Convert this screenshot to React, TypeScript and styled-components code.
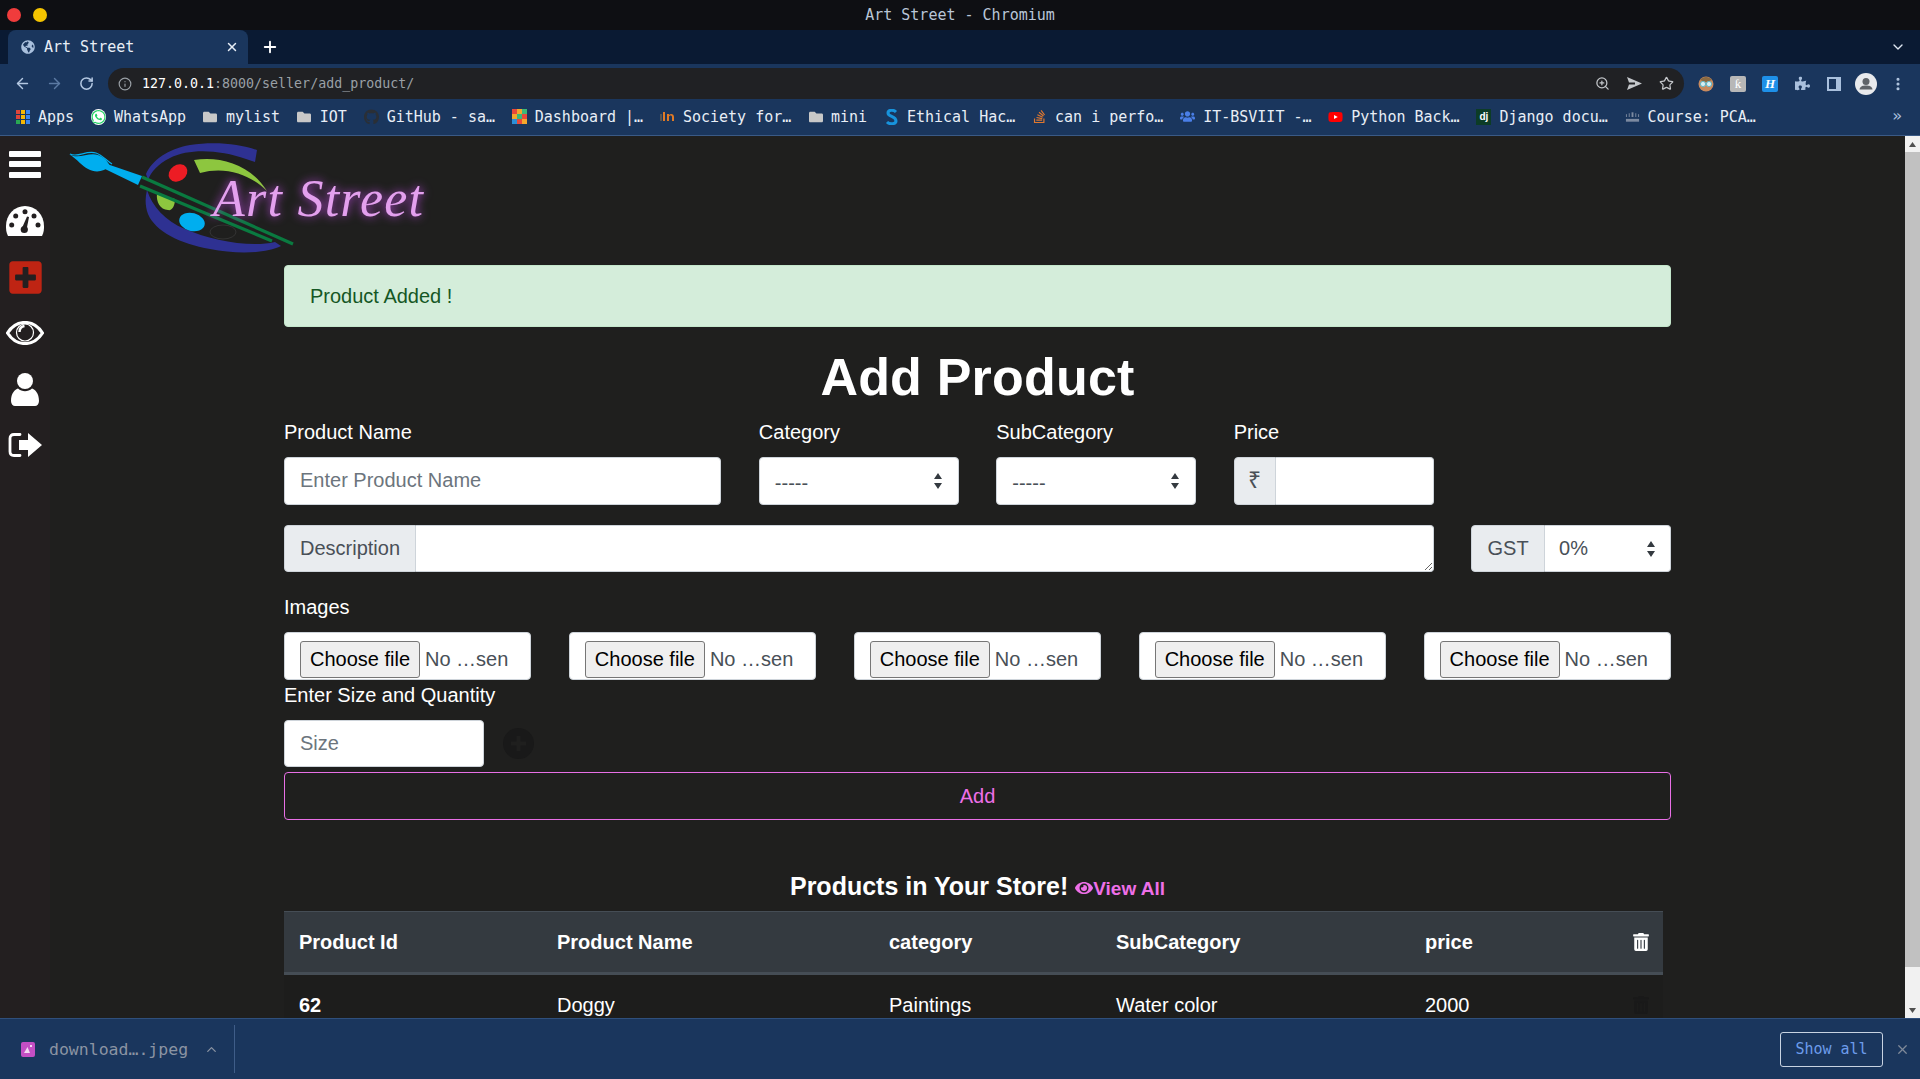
import React from "react";
import styled, { createGlobalStyle } from "styled-components";
import {
  FaEye,
  FaFolder,
  FaGithub,
  FaGlobeAmericas,
  FaPlusSquare,
  FaPuzzlePiece,
  FaStackOverflow,
  FaTrashAlt,
  FaUsers,
  FaWhatsapp,
  FaYoutube,
} from "react-icons/fa";
import { ArrowLeft, ArrowRight, ChevronDown, ChevronUp, Info, MoreVertical, Plus, RotateCw, Star, X, ZoomIn } from "lucide-react";

const GlobalStyle = createGlobalStyle`
  html, body {
    margin: 0;
    padding: 0;
    height: 100%;
    overflow: hidden;
    background: #1f1f1e;
  }
  * {
    box-sizing: border-box;
  }
`;

const mono = `"DejaVu Sans Mono", "Liberation Mono", monospace`;
const sans = `"Liberation Sans", Arial, sans-serif`;

const selectArrow =
  "data:image/svg+xml,%3csvg xmlns='http://www.w3.org/2000/svg' width='10' height='20' viewBox='0 0 10 20'%3e%3cpath fill='%23343a40' d='M5 2l4 6H1zM5 18l-4-6h8z'/%3e%3c/svg%3e";

const Page = styled.div`
  height: 100vh;
  display: flex;
  flex-direction: column;
  overflow: hidden;
`;

const TitleBar = styled.div`
  flex: 0 0 30px;
  background: #0e0f13;
  display: flex;
  align-items: center;
  padding-left: 7px;
  gap: 12px;
  position: relative;
`;

const WindowDot = styled.span<{ $color: string }>`
  width: 14px;
  height: 14px;
  border-radius: 50%;
  background: ${(p) => p.$color};
`;

const WindowTitle = styled.div`
  position: absolute;
  left: 0;
  right: 0;
  text-align: center;
  font: 15px ${mono};
  color: #b9c6d8;
`;

const TabStrip = styled.div`
  flex: 0 0 34px;
  background: #0a1a33;
  display: flex;
  align-items: stretch;
  padding-left: 8px;
  color: #fff;
`;

const Tab = styled.div`
  width: 240px;
  background: #1a365d;
  border-radius: 8px 8px 0 0;
  display: flex;
  align-items: center;
  padding: 0 9px 0 13px;
  font: 15px ${mono};
  color: #e8eef6;
  svg:first-child {
    color: #a9c0dd;
    margin-right: 9px;
  }
  span {
    flex: 1;
  }
`;

const NewTab = styled.div`
  width: 44px;
  display: flex;
  align-items: center;
  justify-content: center;
`;

const TabMenu = styled.div`
  margin-left: auto;
  width: 45px;
  display: flex;
  align-items: center;
  justify-content: center;
  color: #dfe7f2;
`;

const Toolbar = styled.div`
  flex: 0 0 38px;
  background: #1a365d;
  display: flex;
  align-items: flex-start;
  padding: 4px 6px 0;
`;

const ToolButton = styled.div<{ $dim?: boolean }>`
  flex: 0 0 32px;
  height: 31px;
  display: flex;
  align-items: center;
  justify-content: center;
  color: ${(p) => (p.$dim ? "#5b7aa3" : "#b4c8e2")};
`;

const Omnibox = styled.div`
  flex: 1;
  height: 31px;
  margin: 0 6px;
  background: #202124;
  border-radius: 16px;
  display: flex;
  align-items: center;
  padding: 0 2px 0 10px;
  color: #9aa0a6;
  font: 13.3px ${mono};
`;

const UrlHost = styled.span`
  color: #fff;
  margin-left: 10px;
`;

const UrlSpacer = styled.div`
  flex: 1;
`;

const ExtensionTile = styled.div<{ $bg: string; $italic?: boolean }>`
  width: 16px;
  height: 16px;
  border-radius: 2px;
  background: ${(p) => p.$bg};
  color: #fff;
  display: flex;
  align-items: center;
  justify-content: center;
  font: ${(p) => (p.$italic ? "italic bold 13px" : "13px")} "Liberation Serif", serif;
`;

const BookmarkBar = styled.div`
  flex: 0 0 34px;
  background: #1a365d;
  border-bottom: 1px solid #3a5a86;
  display: flex;
  align-items: center;
  padding: 0 0 4px 15px;
  gap: 16.75px;
  font: 15px ${mono};
  color: #e8eef6;
  position: relative;
`;

const Bookmark = styled.div`
  display: flex;
  align-items: center;
  gap: 8px;
  white-space: nowrap;
`;

const FaviconSlot = styled.span`
  width: 15px;
  height: 16px;
  display: flex;
  align-items: center;
  justify-content: center;
`;

const AppsGrid = styled.span`
  display: grid;
  grid-template-columns: repeat(3, 4px);
  grid-auto-rows: 4px;
  gap: 1px;
  i:nth-child(3n + 1) {
    background: #e0453a;
  }
  i:nth-child(3n + 2) {
    background: #f6b704;
  }
  i:nth-child(3n) {
    background: #3a86f0;
  }
  i:nth-child(n + 7):nth-child(3n + 1) {
    background: #2aa853;
  }
`;

const TinkerTile = styled.span`
  display: grid;
  grid-template-columns: repeat(3, 5px);
  grid-auto-rows: 5px;
  i:nth-child(1),
  i:nth-child(6),
  i:nth-child(8) {
    background: #e8483a;
  }
  i:nth-child(2),
  i:nth-child(4),
  i:nth-child(9) {
    background: #f4a72c;
  }
  i:nth-child(3),
  i:nth-child(5) {
    background: #3cb878;
  }
  i:nth-child(7) {
    background: #2a8fd8;
  }
`;

const DjangoTile = styled.span`
  width: 15px;
  height: 16px;
  background: #0c3c26;
  color: #fff;
  font: bold 10px ${sans};
  display: flex;
  align-items: center;
  justify-content: center;
`;

const MoreBookmarks = styled.div`
  position: absolute;
  right: 18px;
  top: 4px;
  color: #a9c0dd;
  font-size: 16px;
`;

const Workspace = styled.div`
  flex: 1;
  min-height: 0;
  display: flex;
  background: #1f1f1e;
  overflow: hidden;
`;

const Sidebar = styled.nav`
  flex: 0 0 50px;
  background: #231f20;
  padding-top: 1px;
  color: #fff;
`;

const SideItem = styled.div<{ $up?: number }>`
  height: 56px;
  display: flex;
  align-items: center;
  justify-content: center;
  padding-bottom: ${(p) => p.$up ?? 0}px;
`;

const Burger = styled.div`
  width: 32px;
  display: flex;
  flex-direction: column;
  gap: 4.5px;
  i {
    height: 6px;
    border-radius: 1px;
    background: #fff;
  }
`;

const Main = styled.main`
  flex: 1;
  min-width: 0;
  overflow: hidden;
  font-family: ${sans};
  font-size: 20px;
  line-height: 30px;
  color: #fff;
`;

const LogoMark = styled.svg`
  display: block;
  width: 380px;
  height: 125px;
  margin-left: 10px;
`;

const NeonText = styled.text`
  font-family: "Liberation Serif", serif;
  font-style: italic;
  font-size: 52px;
  fill: #e3a0ee;
  filter: drop-shadow(0 0 5px #b548d6);
`;

const Container = styled.div`
  width: 1387px;
  margin: 4px 0 0 234px;
`;

const Alert = styled.div`
  height: 62px;
  background: #d4edda;
  border: 1px solid #c3e6cb;
  border-radius: 4px;
  color: #155724;
  display: flex;
  align-items: center;
  padding-left: 25px;
`;

const PageTitle = styled.h1`
  margin: 21px 0 11px;
  text-align: center;
  font-size: 52px;
  line-height: 58px;
  letter-spacing: 0.2px;
  font-weight: 700;
`;

const FormGrid = styled.div<{ $mb?: number }>`
  display: grid;
  grid-template-columns: repeat(12, 1fr);
  column-gap: 37.5px;
  margin-bottom: ${(p) => p.$mb ?? 20}px;
`;

const Field = styled.div<{ $span: number }>`
  grid-column: span ${(p) => p.$span};
  min-width: 0;
`;

const Label = styled.label`
  display: block;
  height: 30px;
  margin-bottom: 10px;
`;

const controlBase = `
  border: 1px solid #ced4da;
  background: #fff;
  color: #495057;
  font: 20px ${sans};
  outline: none;
`;

const TextInput = styled.input`
  ${controlBase}
  display: block;
  width: 100%;
  height: 48px;
  padding: 0 15px 2px;
  border-radius: 4px;
  &::placeholder {
    color: #6c757d;
    opacity: 1;
  }
`;

const SelectBox = styled.select<{ $h?: number }>`
  ${controlBase}
  appearance: none;
  display: block;
  width: 100%;
  height: ${(p) => p.$h ?? 48}px;
  padding: 3px 28px 0 15px;
  border-radius: 4px;
  background: #fff url("${selectArrow}") no-repeat right 15px center;
`;

const InputGroup = styled.div<{ $h: number }>`
  display: flex;
  height: ${(p) => p.$h}px;
`;

const Addon = styled.span<{ $w: number; $big?: boolean }>`
  flex: 0 0 ${(p) => p.$w}px;
  background: #e9ecef;
  border: 1px solid #ced4da;
  border-radius: 4px 0 0 4px;
  color: #495057;
  font-size: ${(p) => (p.$big ? 23 : 20)}px;
  padding-bottom: 2px;
  display: flex;
  align-items: center;
  justify-content: center;
`;

const GroupInput = styled(TextInput)`
  flex: 1;
  min-width: 0;
  height: 100%;
  border-left: 0;
  border-radius: 0 4px 4px 0;
`;

const GroupArea = styled.textarea`
  ${controlBase}
  flex: 1;
  min-width: 0;
  border-left: 0;
  border-radius: 0 4px 4px 0;
  padding: 8px 15px;
  resize: vertical;
`;

const GroupSelect = styled(SelectBox)`
  flex: 1;
  min-width: 0;
  border-left: 0;
  border-radius: 0 4px 4px 0;
  padding: 0 28px 2px 14px;
  background-position: right 14px center;
`;

const FileRow = styled.div`
  display: grid;
  grid-template-columns: repeat(5, 1fr);
  column-gap: 37.5px;
`;

const FileBox = styled.div`
  ${controlBase}
  height: 48px;
  padding: 8px 15px 0;
  border-radius: 4px;
  overflow: hidden;
  display: flex;
  align-items: flex-start;
  gap: 5px;
  line-height: 37px;
`;

const FileButton = styled.button`
  flex: 0 0 120px;
  height: 37px;
  padding: 0;
  font: 20px ${sans};
  color: #000;
  background: #efefef;
  border: 1px solid #767676;
  border-radius: 3px;
`;

const SizeRow = styled.div`
  display: flex;
  align-items: center;
  gap: 19px;
  margin-bottom: 5px;
`;

const SizeInput = styled(TextInput)`
  width: 200px;
  height: 47px;
  padding-bottom: 0;
`;

const AddRoundIcon = styled.svg`
  width: 31px;
  height: 31px;
  color: #191919;
`;

const AddButton = styled.button`
  display: block;
  width: 100%;
  height: 48px;
  background: transparent;
  border: 1px solid #e86fe6;
  border-radius: 4px;
  color: #ee6fe8;
  font: 20px ${sans};
`;

const StoreHeading = styled.h2`
  margin: 48px 0 4px;
  text-align: center;
  font-size: 25px;
  line-height: 36px;
  font-weight: 700;
`;

const ViewAll = styled.a`
  margin-left: 7px;
  font-size: 19px;
  color: #ee6fe8;
  svg {
    vertical-align: -2px;
  }
`;

const ProductTable = styled.table`
  width: 1379px;
  table-layout: fixed;
  border-collapse: collapse;
  background: #1d1d1c;
`;

const HeadCell = styled.th`
  background: #343a40;
  border-top: 1px solid #454d55;
  border-bottom: 3px solid #454d55;
  padding: 15px;
  text-align: left;
  font-weight: 700;
`;

const BodyCell = styled.td<{ $bold?: boolean }>`
  padding: 15px;
  font-weight: ${(p) => (p.$bold ? 700 : 400)};
`;

const TrashCell = styled.span<{ $color: string }>`
  color: ${(p) => p.$color};
  display: block;
  font-size: 18px;
  line-height: 1;
  svg {
    display: block;
  }
`;

const Scrollbar = styled.div`
  flex: 0 0 15px;
  background: #f1f1f1;
  display: flex;
  flex-direction: column;
  align-items: stretch;
`;

const ScrollArrow = styled.div`
  height: 16px;
  display: flex;
  align-items: center;
  justify-content: center;
  flex-shrink: 0;
`;

const ScrollThumb = styled.div`
  flex: 0 0 815px;
  background: #c1c1c1;
`;

const ScrollGap = styled.div`
  flex: 1;
`;

const DownloadBar = styled.footer`
  flex: 0 0 61px;
  background: #1a365d;
  border-top: 1px solid #2f4f7c;
  display: flex;
  align-items: center;
  padding-left: 21px;
  font: 16.5px ${mono};
  color: #8b94a3;
`;

const FileChip = styled.svg`
  width: 14px;
  height: 15px;
  margin-right: 14px;
`;

const ChipDivider = styled.div`
  width: 1px;
  height: 48px;
  background: #3f5d88;
  margin-left: 15px;
`;

const ShowAll = styled.button`
  margin-left: auto;
  width: 103px;
  height: 35px;
  background: transparent;
  border: 1px solid #c8d3e2;
  border-radius: 3px;
  color: #6d9ceb;
  font: 15px ${mono};
  padding: 0;
`;

const DismissBar = styled.div`
  width: 37px;
  padding-left: 2px;
  display: flex;
  justify-content: center;
  color: #7f8a99;
`;

const bookmarks: { label: string; icon: React.ReactNode }[] = [
  {
    label: "WhatsApp",
    icon: <FaWhatsapp size={16} color="#25d366" style={{ background: "#fff", borderRadius: "50%" }} />,
  },
  { label: "mylist", icon: <FaFolder size={14} color="#c8c8c8" /> },
  { label: "IOT", icon: <FaFolder size={14} color="#c8c8c8" /> },
  { label: "GitHub - sa…", icon: <FaGithub size={16} color="#2a2f36" /> },
  {
    label: "Dashboard |…",
    icon: (
      <TinkerTile>
        {Array.from({ length: 9 }, (_, i) => (
          <i key={i} />
        ))}
      </TinkerTile>
    ),
  },
  {
    label: "Society for…",
    icon: (
      <svg width="15" height="12" viewBox="0 0 15 12">
        <rect x="0" y="3" width="2" height="7" fill="#555" />
        <rect x="3" y="1" width="2" height="9" fill="#e07a25" />
        <path d="M7 10V3h2v1c2-2 5-1 5 2v4h-2V6c0-2-3-2-3 0v4z" fill="#e07a25" />
      </svg>
    ),
  },
  { label: "mini", icon: <FaFolder size={14} color="#c8c8c8" /> },
  {
    label: "Ethical Hac…",
    icon: (
      <svg width="13" height="16" viewBox="0 0 13 16">
        <path d="M11 3C8 0 3 1 3 4c0 4 8 3 8 8 0 3-6 4-9 1" fill="none" stroke="#1793dc" strokeWidth="3" />
      </svg>
    ),
  },
  { label: "can i perfo…", icon: <FaStackOverflow size={15} color="#e0782f" /> },
  { label: "IT-BSVIIT -…", icon: <FaUsers size={15} color="#4a7fe8" /> },
  { label: "Python Back…", icon: <FaYoutube size={16} color="#f00" style={{ background: "linear-gradient(#fff,#fff) center/6px 6px no-repeat" }} /> },
  { label: "Django docu…", icon: <DjangoTile>dj</DjangoTile> },
  {
    label: "Course: PCA…",
    icon: (
      <svg width="16" height="10" viewBox="0 0 16 10" fill="#7c8aa0">
        <rect x="1" y="2" width="1" height="3" />
        <rect x="4" y="1" width="1" height="4" />
        <rect x="7" y="0" width="2" height="5" />
        <rect x="11" y="1" width="1" height="4" />
        <rect x="14" y="2" width="1" height="3" />
        <rect x="1" y="7" width="14" height="3" />
      </svg>
    ),
  },
];

const columns = [258, 332, 227, 309, 207, 46];
const headers = ["Product Id", "Product Name", "category", "SubCategory", "price"];

function Logo() {
  return (
    <LogoMark viewBox="0 0 380 125" aria-label="Art Street logo">
      <path
        d="M197 14L195 26L186 23C160 14 130 12 110 22C98 28 91 36 88 44L86 38C92 24 108 13 130 9C155 5 180 8 197 14Z"
        fill="#2e3192"
      />
      <path
        d="M87 54C92 70 105 85 125 93C150 104 190 112 215 106L221 110C205 118 175 118 150 113C120 108 95 95 88 78C85 70 85 62 87 54Z"
        fill="#2e3192"
      />
      <ellipse cx="118" cy="37" rx="10" ry="8" transform="rotate(-35 118 37)" fill="#ed1c24" />
      <ellipse cx="132" cy="86" rx="13" ry="9" transform="rotate(15 132 86)" fill="#00aeef" />
      <path d="M134 24C160 20 190 28 207 55C190 38 165 30 140 37Z" fill="#8dc63f" />
      <path d="M97 58L115 63C115 70 112 75 108 74C100 74 96 65 97 58Z" fill="#8dc63f" />
      <ellipse cx="163" cy="96" rx="13" ry="7" fill="none" stroke="#333" />
      <path d="M82 41L233 108M80 50L212 105" stroke="#0a7a40" strokeWidth="3.2" fill="none" />
      <path d="M47 28L82 40L78 49L45 33Z" fill="#00aeef" />
      <path d="M9 18C18 24 28 16 38 19C44 21 48 26 50 30C44 36 35 37 28 33C22 30 18 24 9 18Z" fill="#00aeef" />
      <path d="M10 18C18 22 26 14 36 17C42 19 46 24 52 28" fill="none" stroke="#00aeef" strokeWidth="1.2" />
      <NeonText x="153" y="80" textLength="210" lengthAdjust="spacing">
        Art Street
      </NeonText>
    </LogoMark>
  );
}

function GaugeIcon() {
  return (
    <svg width="38" height="30" viewBox="0 0 38 30">
      <path d="M2 30C0 26 0 23 0 20A19 20 0 0 1 38 20C38 23 38 26 36 30Z" fill="#fff" />
      <g fill="#231f20">
        <circle cx="9.7" cy="10" r="2.5" />
        <circle cx="19" cy="5.7" r="2.5" />
        <circle cx="28" cy="10" r="2.5" />
        <circle cx="5.7" cy="19" r="2.5" />
        <circle cx="32" cy="19" r="2.5" />
        <circle cx="18.3" cy="23.5" r="3.6" />
        <path d="M16 22L21 10.5L23 11L20.5 24Z" />
      </g>
    </svg>
  );
}

function FilePicker() {
  return (
    <FileBox>
      <FileButton type="button">Choose file</FileButton>
      No …sen
    </FileBox>
  );
}

export default function App() {
  return (
    <Page>
      <GlobalStyle />
      <TitleBar>
        <WindowDot $color="#f03c3c" />
        <WindowDot $color="#f5c400" />
        <WindowTitle>Art Street - Chromium</WindowTitle>
      </TitleBar>

      <TabStrip>
        <Tab>
          <FaGlobeAmericas size={14} />
          <span>Art Street</span>
          <X size={14} strokeWidth={2.5} />
        </Tab>
        <NewTab>
          <Plus size={18} strokeWidth={2.5} />
        </NewTab>
        <TabMenu>
          <ChevronDown size={16} />
        </TabMenu>
      </TabStrip>

      <Toolbar>
        <ToolButton>
          <ArrowLeft size={17} />
        </ToolButton>
        <ToolButton $dim>
          <ArrowRight size={17} />
        </ToolButton>
        <ToolButton>
          <RotateCw size={15} strokeWidth={2.4} />
        </ToolButton>
        <Omnibox>
          <Info size={14} />
          <UrlHost>127.0.0.1</UrlHost>:8000/seller/add_product/
          <UrlSpacer />
          <ToolButton>
            <ZoomIn size={15} color="#c4c7cb" />
          </ToolButton>
          <ToolButton>
            <svg width="15" height="13" viewBox="0 0 15 13" fill="#c4c7cb">
              <path d="M0 0L15 6.5L0 13L2 7.5H8V5.5H2Z" />
            </svg>
          </ToolButton>
          <ToolButton>
            <Star size={15} color="#c4c7cb" />
          </ToolButton>
        </Omnibox>
        <ToolButton>
          <svg width="16" height="16" viewBox="0 0 16 16">
            <circle cx="8" cy="8" r="7.5" fill="#c98a5e" />
            <path d="M2 4C5 0 11 0 14 4L8 6Z" fill="#8a6a42" />
            <circle cx="5" cy="8" r="2.6" fill="#d8eef2" stroke="#5fb7c9" />
            <circle cx="11" cy="8" r="2.6" fill="#d8eef2" stroke="#5fb7c9" />
          </svg>
        </ToolButton>
        <ToolButton>
          <ExtensionTile $bg="#b7b7b7">ƙ</ExtensionTile>
        </ToolButton>
        <ToolButton>
          <ExtensionTile $bg="#1e90e8" $italic>
            H
          </ExtensionTile>
        </ToolButton>
        <ToolButton>
          <FaPuzzlePiece size={15} color="#a9c0dd" />
        </ToolButton>
        <ToolButton>
          <svg width="14" height="14" viewBox="0 0 14 14">
            <rect x="1" y="1" width="12" height="12" fill="none" stroke="#a9c0dd" strokeWidth="2" />
            <rect x="9" y="1" width="4" height="12" fill="#a9c0dd" />
          </svg>
        </ToolButton>
        <ToolButton>
          <svg width="22" height="22" viewBox="0 0 22 22">
            <circle cx="11" cy="11" r="11" fill="#e8eaed" />
            <circle cx="11" cy="8.5" r="3.5" fill="#5f6368" />
            <path d="M4.5 16.5C5 13 8 12.5 11 12.5S17 13 17.5 16.5Z" fill="#5f6368" />
          </svg>
        </ToolButton>
        <ToolButton>
          <MoreVertical size={16} strokeWidth={2.6} />
        </ToolButton>
      </Toolbar>

      <BookmarkBar>
        <Bookmark>
          <FaviconSlot>
            <AppsGrid>
              {Array.from({ length: 9 }, (_, i) => (
                <i key={i} />
              ))}
            </AppsGrid>
          </FaviconSlot>
          Apps
        </Bookmark>
        {bookmarks.map((b) => (
          <Bookmark key={b.label}>
            <FaviconSlot>{b.icon}</FaviconSlot>
            {b.label}
          </Bookmark>
        ))}
        <MoreBookmarks>»</MoreBookmarks>
      </BookmarkBar>

      <Workspace>
        <Sidebar>
          <SideItem $up={2}>
            <Burger>
              <i />
              <i />
              <i />
            </Burger>
          </SideItem>
          <SideItem>
            <GaugeIcon />
          </SideItem>
          <SideItem>
            <FaPlusSquare size={37} color="#bf2413" />
          </SideItem>
          <SideItem>
            <svg width="38" height="24" viewBox="0 0 38 24">
              <path d="M1.5 12C6 5 12 1.5 19 1.5S32 5 36.5 12C32 19 26 22.5 19 22.5S6 19 1.5 12Z" fill="none" stroke="#fff" strokeWidth="3.2" />
              <circle cx="19" cy="11.5" r="8.5" fill="none" stroke="#fff" strokeWidth="1.2" />
              <path d="M13.5 11C13.5 8 15.5 5.5 18.5 5" fill="none" stroke="#fff" strokeWidth="2.4" />
            </svg>
          </SideItem>
          <SideItem>
            <svg width="28" height="33" viewBox="0 0 28 33" fill="#fff">
              <circle cx="14" cy="8" r="8" />
              <path d="M0 28C0 20 4 16.5 7 15.5C11 19 17 19 21 15.5C24 16.5 28 20 28 28C28 31 26 33 24 33H4C2 33 0 31 0 28Z" />
            </svg>
          </SideItem>
          <SideItem>
            <svg width="34" height="26" viewBox="0 0 34 26" fill="#fff">
              <path d="M12 2.5H6C3.5 2.5 2 4 2 6.5V19.5C2 22 3.5 23.5 6 23.5H12" fill="none" stroke="#fff" strokeWidth="2.8" strokeLinecap="round" />
              <path d="M11 8H20V1L34 13L20 25V18H11Z" />
            </svg>
          </SideItem>
        </Sidebar>

        <Main>
          <Logo />
          <Container>
            <Alert>Product Added !</Alert>
            <PageTitle>Add Product</PageTitle>

            <FormGrid>
              <Field $span={4}>
                <Label>Product Name</Label>
                <TextInput placeholder="Enter Product Name" />
              </Field>
              <Field $span={2}>
                <Label>Category</Label>
                <SelectBox>
                  <option>-----</option>
                </SelectBox>
              </Field>
              <Field $span={2}>
                <Label>SubCategory</Label>
                <SelectBox>
                  <option>-----</option>
                </SelectBox>
              </Field>
              <Field $span={2}>
                <Label>Price</Label>
                <InputGroup $h={48}>
                  <Addon $w={42} $big>
                    ₹
                  </Addon>
                  <GroupInput />
                </InputGroup>
              </Field>
            </FormGrid>

            <FormGrid>
              <Field $span={10}>
                <InputGroup $h={47}>
                  <Addon $w={132}>Description</Addon>
                  <GroupArea />
                </InputGroup>
              </Field>
              <Field $span={2}>
                <InputGroup $h={47}>
                  <Addon $w={74}>GST</Addon>
                  <GroupSelect $h={47}>
                    <option>0%</option>
                  </GroupSelect>
                </InputGroup>
              </Field>
            </FormGrid>

            <Label>Images</Label>
            <FileRow>
              <FilePicker />
              <FilePicker />
              <FilePicker />
              <FilePicker />
              <FilePicker />
            </FileRow>

            <Label>Enter Size and Quantity</Label>
            <SizeRow>
              <SizeInput placeholder="Size" />
              <AddRoundIcon viewBox="0 0 31 31">
                <circle cx="15.5" cy="15.5" r="15.5" fill="currentColor" />
                <path d="M15.5 8V23M8 15.5H23" stroke="#1f1f1e" strokeWidth="4" />
              </AddRoundIcon>
            </SizeRow>
            <AddButton>Add</AddButton>

            <StoreHeading>
              Products in Your Store!
              <ViewAll>
                <FaEye size={18} />
                View All
              </ViewAll>
            </StoreHeading>

            <ProductTable>
              <colgroup>
                {columns.map((w, i) => (
                  <col key={i} width={w} />
                ))}
              </colgroup>
              <thead>
                <tr>
                  {headers.map((h) => (
                    <HeadCell key={h}>{h}</HeadCell>
                  ))}
                  <HeadCell>
                    <TrashCell $color="#fff">
                      <FaTrashAlt />
                    </TrashCell>
                  </HeadCell>
                </tr>
              </thead>
              <tbody>
                <tr>
                  <BodyCell $bold>62</BodyCell>
                  <BodyCell>Doggy</BodyCell>
                  <BodyCell>Paintings</BodyCell>
                  <BodyCell>Water color</BodyCell>
                  <BodyCell>2000</BodyCell>
                  <BodyCell>
                    <TrashCell $color="#191919">
                      <FaTrashAlt />
                    </TrashCell>
                  </BodyCell>
                </tr>
              </tbody>
            </ProductTable>
          </Container>
        </Main>

        <Scrollbar>
          <ScrollArrow>
            <svg width="7" height="5" viewBox="0 0 7 5" fill="#505050">
              <path d="M3.5 0L7 5H0Z" />
            </svg>
          </ScrollArrow>
          <ScrollThumb />
          <ScrollGap />
          <ScrollArrow>
            <svg width="7" height="5" viewBox="0 0 7 5" fill="#505050">
              <path d="M3.5 5L0 0H7Z" />
            </svg>
          </ScrollArrow>
        </Scrollbar>
      </Workspace>

      <DownloadBar>
        <FileChip viewBox="0 0 14 15">
          <rect width="14" height="15" rx="2" fill="#c44fc4" />
          <path d="M3 11L6.5 5L9 11Z" fill="#f3d7f3" />
          <rect x="9" y="3" width="2" height="2" fill="#f3d7f3" />
        </FileChip>
        download….jpeg
        <ChevronUp size={15} style={{ marginLeft: 16 }} />
        <ChipDivider />
        <ShowAll>Show all</ShowAll>
        <DismissBar>
          <X size={15} />
        </DismissBar>
      </DownloadBar>
    </Page>
  );
}
